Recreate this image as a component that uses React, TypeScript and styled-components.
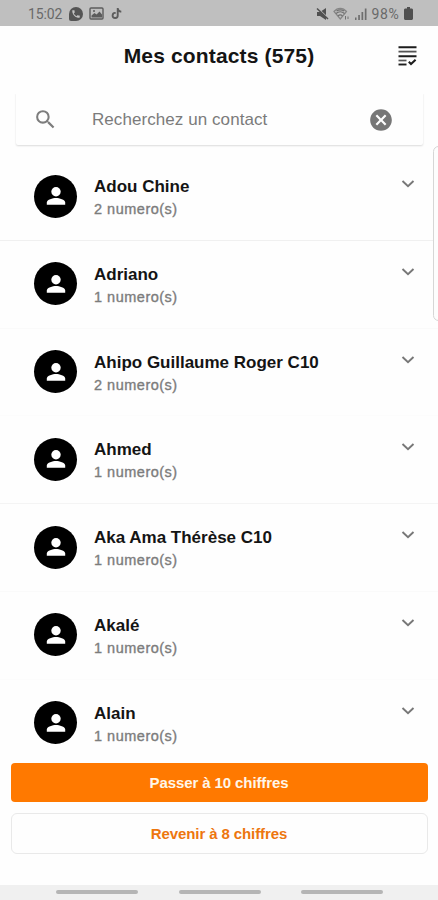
import React from "react";
import styled, { createGlobalStyle } from "styled-components";
import { FaTiktok } from "react-icons/fa";
import { MdCancel, MdPhone, MdSearch } from "react-icons/md";

const GlobalStyle = createGlobalStyle`
  *, *::before, *::after { box-sizing: border-box; }
  body {
    margin: 0;
    background: #fefefe;
    font-family: "Liberation Sans", Arial, sans-serif;
    color: #141414;
  }
`;

const Screen = styled.div`
  position: relative;
  display: flex;
  flex-direction: column;
  width: 438px;
  height: 900px;
  overflow: hidden;
  background: #fefefe;
`;

const StatusBar = styled.div`
  flex: none;
  display: flex;
  justify-content: space-between;
  align-items: center;
  height: 26px;
  padding: 1px 25px 0 28px;
  background: #bfbfbf;
  color: #5c5c5c;
`;

const StatusGroup = styled.div<{ $gap: number }>`
  display: flex;
  align-items: center;
  gap: ${(p) => p.$gap}px;
  svg { display: block; }
`;

const StatusText = styled.span<{ $spacing: number }>`
  font: 400 14px/20px Roboto, sans-serif;
  letter-spacing: ${(p) => p.$spacing}px;
  color: #696969;
`;

const Header = styled.header`
  flex: none;
  display: grid;
  grid-template-columns: 60px 1fr 60px;
  align-items: center;
  height: 60px;
`;

const Title = styled.h1`
  grid-column: 2;
  margin: 0;
  text-align: center;
  font-size: 21px;
  line-height: 24px;
  font-weight: 700;
  letter-spacing: 0.15px;
  white-space: nowrap;
`;

const HeaderAction = styled.button`
  justify-self: start;
  margin-left: 20px;
  padding: 0;
  border: 0;
  background: none;
  svg { display: block; }
`;

const SearchBox = styled.div`
  flex: none;
  display: flex;
  align-items: center;
  height: 53px;
  margin: 6px 15px 1px 16px;
  padding: 2px 29px 0 17px;
  border-radius: 2px;
  background: #fefefe;
  box-shadow: 0 1px 2px rgba(0, 0, 0, 0.14);
  clip-path: inset(2px -4px -4px -4px);
`;

const Placeholder = styled.span`
  flex: 1;
  margin-left: 34px;
  font-size: 17px;
  line-height: 22px;
  letter-spacing: 0.07px;
  color: #7b7b7b;
`;

const List = styled.ul`
  flex: 1;
  min-height: 0;
  overflow: hidden;
  margin: 0;
  padding: 7px 0 0;
  list-style: none;
`;

const Row = styled.li<{ $line: string }>`
  display: flex;
  align-items: flex-start;
  height: 87.8px;
  padding: 21.5px 23px 0 34px;
  border-bottom: 1px solid ${(p) => p.$line};
`;

const Avatar = styled.div`
  flex: none;
  display: flex;
  align-items: center;
  justify-content: center;
  width: 43px;
  height: 43px;
  border-radius: 50%;
  background: #000;
  color: #fff;
`;

const Details = styled.div`
  flex: 1;
  margin: 1.500px 0 0 17px;
`;

const Name = styled.div`
  font-size: 17px;
  line-height: 22px;
  font-weight: 700;
  white-space: nowrap;
`;

const Count = styled.div`
  font-size: 14.5px;
  line-height: 22px;
  letter-spacing: 0.5px;
  color: #7c7c7c;
  -webkit-text-stroke: 0.35px #7c7c7c;
`;

const Chevron = styled.svg`
  display: block;
  margin-top: 4.500px;
`;

const Actions = styled.div`
  flex: none;
  display: flex;
  flex-direction: column;
  gap: 11px;
  height: 122px;
  padding: 0 10px 0 11px;
`;

const ActionButton = styled.button<{ $primary?: boolean }>`
  height: ${(p) => (p.$primary ? 39 : 41)}px;
  padding: 0 1px 0 0;
  border: ${(p) => (p.$primary ? "0" : "1px solid #e9e9e9")};
  border-radius: ${(p) => (p.$primary ? 4 : 6)}px;
  background: ${(p) => (p.$primary ? "#ff7900" : "#fefefe")};
  color: ${(p) => (p.$primary ? "#fff6e8" : "#ed760e")};
  font: 700 15px/20px "Liberation Sans", Arial, sans-serif;
  letter-spacing: -0.1px;
`;

const NavBar = styled.nav`
  flex: none;
  display: flex;
  justify-content: space-between;
  height: 15px;
  padding: 5px 55px 0 56px;
  background: #f0f0f0;
`;

const NavHandle = styled.span`
  width: 82px;
  height: 4px;
  border-radius: 2px;
  background: #b5b5b5;
`;

const EdgePanel = styled.div`
  position: absolute;
  top: 146px;
  right: -6px;
  width: 11px;
  height: 175px;
  border: 1px solid #d6d6d6;
  border-radius: 6px;
  background: #fdfdfd;
`;

const Bubble = styled.span`
  display: flex;
  align-items: center;
  justify-content: center;
  width: 14px;
  height: 14px;
  border-radius: 50% 50% 50% 15%;
  background: #555;
  color: #c4c4c4;
`;

const contacts = [
  { name: "Adou Chine", count: 2, line: "#f0f0f0" },
  { name: "Adriano", count: 1, line: "#fafafa" },
  { name: "Ahipo Guillaume Roger C10", count: 2, line: "#fcfcfc" },
  { name: "Ahmed", count: 1, line: "#f4f4f4" },
  { name: "Aka Ama Thérèse C10", count: 1, line: "#fafafa" },
  { name: "Akalé", count: 1, line: "#fcfcfc" },
  { name: "Alain", count: 1, line: "transparent" },
];

const PersonIcon = () => (
  <svg width="20" height="20" viewBox="0 0 20 20" fill="currentColor">
    <circle cx="10" cy="5.700" r="4.700" />
    <path d="M0.800 18.700v-2.200c0-3 6-4.600 9.200-4.600s9.200 1.600 9.200 4.600v2.200z" />
  </svg>
);

const PictureIcon = () => (
  <svg width="15" height="13" viewBox="0 0 15 13" fill="none">
    <rect x="1" y="1" width="13" height="11" rx="1" stroke="#5c5c5c" strokeWidth="1.4" />
    <path d="M2.5 10.5v-2l3-2.5 2 1.5 3-3 2.5 3v3z" fill="#5c5c5c" />
    <circle cx="5" cy="4" r="1" fill="#5c5c5c" />
  </svg>
);

const MuteIcon = () => (
  <svg width="13" height="14" viewBox="0 0 13 14">
    <path d="M1 5h3l6-4v12L4 9H1z" fill="#505050" />
    <path d="M1.500 1l10.500 10" stroke="#bfbfbf" strokeWidth="1.200" />
    <path d="M1 1.500l11 10.500" stroke="#505050" strokeWidth="1.500" />
  </svg>
);

const WifiIcon = () => (
  <svg width="17" height="14" viewBox="0 0 17 14" fill="none" stroke="#707070" strokeWidth="1.2">
    <path d="M1 4.5C4.5.2 10 .2 13.5 4.5L7.3 12z" stroke="#858585" />
    <path d="M3 6.5c2.5-2.3 6-2.3 8.5 0M5 9c1.5-1.4 3-1.4 4.5 0M3.5 4c2.4-1.4 5.3-1.4 7.7 0" />
    <path d="M12.500 9V12.500M15 12V9.500" strokeWidth="1" />
  </svg>
);

const SignalIcon = () => (
  <svg width="12" height="12" viewBox="0 0 12 12" fill="#6e6e6e">
    <rect x="0" y="9.5" width="1.5" height="2.5" />
    <rect x="3.2" y="7" width="1.7" height="5" />
    <rect x="6.5" y="4" width="1.7" height="8" />
    <rect x="9.8" y="0.5" width="1.7" height="11.5" />
  </svg>
);

const BatteryIcon = () => (
  <svg width="9" height="13" viewBox="0 0 9 13" fill="#505050">
    <path d="M3 0h3v1.5h1.5c.8 0 1.5.6 1.5 1.4v8.6c0 .8-.7 1.5-1.5 1.500h-6C.7 13 0 12.300 0 11.500V2.900C0 2.100.7 1.500 1.500 1.500H3z" />
  </svg>
);

const ListCheckIcon = () => (
  <svg width="19" height="22" viewBox="0 0 19 22" fill="none" stroke="#1d1d1d">
    <path d="M0.500 2.200H18.500M0.500 11.200H18.500" strokeWidth="2" />
    <path d="M0.500 6.600H18.500" stroke="#555" strokeWidth="1.800" />
    <path d="M0.500 15.500H8.500" stroke="#555" strokeWidth="1.700" />
    <path d="M0.500 19.500H8.500" strokeWidth="1.900" />
    <path d="M10.800 16.800L13 19L17.600 14.800" strokeWidth="2.100" />
  </svg>
);

export default function App() {
  return (
    <>
      <GlobalStyle />
      <Screen>
        <StatusBar>
          <StatusGroup $gap={6.5}>
            <StatusText $spacing={-0.1}>15:02</StatusText>
            <Bubble>
              <MdPhone size={10} />
            </Bubble>
            <PictureIcon />
            <FaTiktok size={11} />
          </StatusGroup>
          <StatusGroup $gap={4.5}>
            <MuteIcon />
            <WifiIcon />
            <SignalIcon />
            <StatusText $spacing={0.7}>98%</StatusText>
            <BatteryIcon />
          </StatusGroup>
        </StatusBar>
        <Header>
          <Title>Mes contacts (575)</Title>
          <HeaderAction aria-label="Sélectionner">
            <ListCheckIcon />
          </HeaderAction>
        </Header>
        <SearchBox>
          <MdSearch size={25} color="#7d7d7d" />
          <Placeholder>Recherchez un contact</Placeholder>
          <MdCancel size={26} color="#777" />
        </SearchBox>
        <List>
          {contacts.map((c) => (
            <Row key={c.name} $line={c.line}>
              <Avatar>
                <PersonIcon />
              </Avatar>
              <Details>
                <Name>{c.name}</Name>
                <Count>{c.count} numero(s)</Count>
              </Details>
              <Chevron width="14" height="10" viewBox="0 0 14 10" fill="none">
                <path d="M1.500 2L7 7.200L12.500 2" stroke="#777" strokeWidth="1.900" />
              </Chevron>
            </Row>
          ))}
        </List>
        <Actions>
          <ActionButton $primary>Passer à 10 chiffres</ActionButton>
          <ActionButton>Revenir à 8 chiffres</ActionButton>
        </Actions>
        <NavBar>
          <NavHandle />
          <NavHandle />
          <NavHandle />
        </NavBar>
        <EdgePanel />
      </Screen>
    </>
  );
}
